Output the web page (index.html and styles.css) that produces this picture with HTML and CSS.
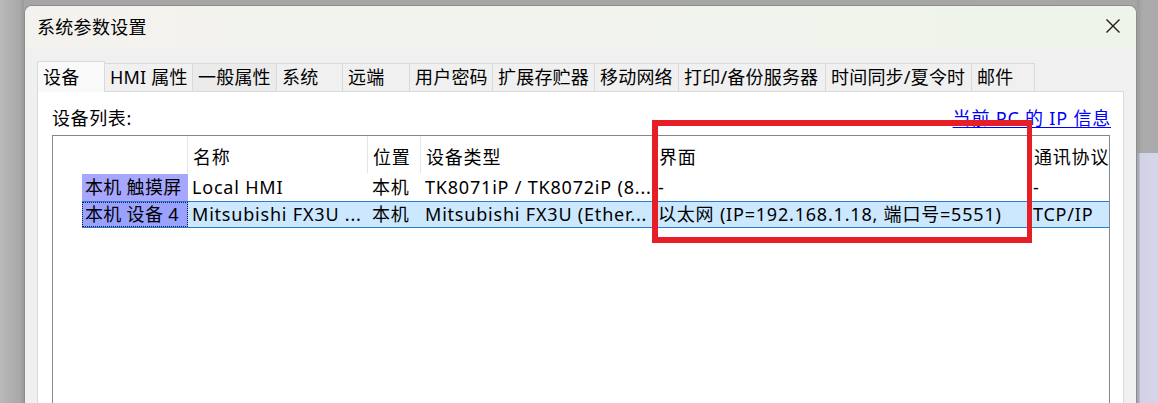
FILE: index.html
```html
<!DOCTYPE html>
<html lang="zh-CN">
<head>
<meta charset="utf-8">
<title>系统参数设置</title>
<link rel="stylesheet" href="styles.css">
</head>
<body>
<div class="gutter-left"></div>
<div class="window">
  <div class="titlebar">
    <span class="title">系统参数设置</span>
    <svg class="close" width="16" height="16" viewBox="0 0 16 16"><path d="M1.5 1.5 L14.5 14.5 M14.5 1.5 L1.5 14.5" stroke="#1a1a1a" stroke-width="1.4" fill="none"/></svg>
  </div>
  <div class="content">
    <div class="tabs">
      <div class="tab tab-active w1">设备</div>
      <div class="tab w2">HMI 属性</div>
      <div class="tab w3">一般属性</div>
      <div class="tab w4">系统</div>
      <div class="tab w5">远端</div>
      <div class="tab w6">用户密码</div>
      <div class="tab w7">扩展存贮器</div>
      <div class="tab w8">移动网络</div>
      <div class="tab w9">打印/备份服务器</div>
      <div class="tab w10">时间同步/夏令时</div>
      <div class="tab w11">邮件</div>
    </div>
    <div class="panel">
      <div class="panel-head">
        <span class="label">设备列表:</span>
        <span class="link">当前 PC 的 IP 信息</span>
      </div>
      <div class="list">
        <div class="list-header">
          <div class="hcell c0"></div>
          <div class="hcell c1">名称</div>
          <div class="hcell c2">位置</div>
          <div class="hcell c3">设备类型</div>
          <div class="hcell c4">界面</div>
          <div class="hcell c5">通讯协议</div>
        </div>
        <div class="row row-first">
          <div class="cells">
            <div class="cell k0 tag">本机 触摸屏</div>
            <div class="cell c1">Local HMI</div>
            <div class="cell c2">本机</div>
            <div class="cell c3">TK8071iP / TK8072iP (8...</div>
            <div class="cell c4">-</div>
            <div class="cell c5">-</div>
          </div>
        </div>
        <div class="row">
          <div class="cells selected">
            <div class="cell k0 tag tag-focus">本机 设备 4</div>
            <div class="cell c1">Mitsubishi FX3U ...</div>
            <div class="cell c2">本机</div>
            <div class="cell c3">Mitsubishi FX3U (Ether...</div>
            <div class="cell c4">以太网 (IP=192.168.1.18, 端口号=5551)</div>
            <div class="cell c5">TCP/IP</div>
          </div>
        </div>
      </div>
    </div>
  </div>
</div>
<div class="gutter-right"><div class="gr-top"></div><div class="gr-bottom"></div></div>
<div class="highlight-box"></div>
</body>
</html>
```
FILE: styles.css
```css
* { box-sizing: border-box; }
html, body { margin: 0; padding: 0; }
body {
  width: 1158px;
  height: 403px;
  overflow: hidden;
  display: flex;
  background: #a6a6a6;
  padding-top: 5px;
  font-family: "Noto Sans", "Noto Sans CJK SC", sans-serif;
  font-size: 18px;
  color: #000;
  position: relative;
}
.gutter-left {
  width: 24px;
  flex: none;
  margin-top: -5px;
  background: linear-gradient(to right, #b9b9b9, #a9a9a9 80%, #9a9a9a);
}
.gutter-right {
  width: 21px;
  flex: none;
  margin-top: -5px;
  display: flex;
  flex-direction: column;
}
.gr-top { height: 153px; background: linear-gradient(to right, #9c9c9c, #ababab 30%, #aaaaaa); }
.gr-bottom { flex: 1; background: linear-gradient(to right, #a9a9b6 0, #a9a9b6 2px, #d2d2e6 3px, #d6d6ea); }

.window {
  width: 1113px;
  flex: none;
  display: flex;
  flex-direction: column;
  border: 1px solid #8c8c8c;
  border-bottom: none;
  border-radius: 8px 8px 0 0;
  overflow: hidden;
  background: #f0f0f0;
}
.titlebar {
  height: 42px;
  flex: none;
  display: flex;
  align-items: center;
  justify-content: space-between;
  padding: 0 16px 0 12px;
  background: linear-gradient(to right, #f4f2ee, #f1f3ec 50%, #eef4ea);
}
.title { line-height: 24px; margin-top: -1px; letter-spacing: 0.3px; }
.close { display: block; margin-top: -3px; margin-right: -1px; }

.content {
  flex: 1;
  display: flex;
  flex-direction: column;
  padding: 13px 12px 0 12px;
}
.tabs {
  display: flex;
  align-items: flex-end;
  height: 30px;
  position: relative;
  z-index: 1;
}
.tab {
  height: 28px;
  border: 1px solid #dadada;
  border-bottom: none;
  border-left: none;
  padding-left: 5px;
  line-height: 27px;
  white-space: nowrap;
  background: #f0f0f0;
  overflow: hidden;
  letter-spacing: 0.2px;
}
.tab-active {
  height: 31px;
  margin-bottom: -1px;
  border-left: 1px solid #dadada;
  background: #f9f9f9;
  line-height: 30px;
}
.w1 { width: 68px; }
.w2 { width: 88px; }
.w3 { width: 84px; background: #ebebeb; }
.w4 { width: 66px; }
.w5 { width: 67px; }
.w6 { width: 83px; }
.w7 { width: 102px; }
.w8 { width: 84px; }
.w9 { width: 147px; }
.w10 { width: 146px; }
.w11 { width: 63px; }

.panel {
  flex: 1;
  border: 1px solid #dadada;
  border-bottom: none;
  background: #fff;
  padding: 13px 13px 0 14px;
  display: flex;
  flex-direction: column;
  letter-spacing: 0.8px;
}
.panel-head {
  height: 26px;
  display: flex;
  justify-content: space-between;
  align-items: center;
  margin-bottom: 4px;
}
.label { line-height: 26px; letter-spacing: 0.6px; }
.link {
  color: #0000ff;
  text-decoration: underline;
  text-underline-offset: 2px;
  line-height: 26px;
  margin-right: -1px;
}
.list {
  flex: 1;
  border: 1px solid #828790;
  border-bottom: none;
  overflow: hidden;
}
.list-header {
  display: flex;
  height: 37px;
}
.hcell {
  flex: none;
  height: 37px;
  border-right: 1px solid #e5e5e5;
  padding-left: 5px;
  padding-top: 7px;
  line-height: 28px;
  white-space: nowrap;
  overflow: hidden;
}
.c0 { width: 135px; }
.c1 { width: 180px; }
.c2 { width: 53px; }
.c3 { width: 233px; }
.c4 { width: 375px; }
.c5 { width: 80px; border-right: none; }
.k0 { width: 106px; }

.row {
  display: flex;
  padding-left: 29px;
  height: 27px;
}
.row-first { margin-top: 1px; }
.cells {
  flex: 1;
  display: flex;
  height: 27px;
}
.cells.selected {
  background: #cce8ff;
  border-top: 1px solid #2a7bd0;
  border-bottom: 1px solid #2a7bd0;
}
.cell {
  flex: none;
  padding-left: 4px;
  line-height: 26px;
  white-space: nowrap;
  overflow: hidden;
}
.cells.selected .cell { line-height: 25px; }
.tag {
  padding-left: 3px;
  background: #a7a7ff;
  letter-spacing: 0.3px;
}
.tag-focus {
  background: #99a2ff;
  outline: 1px dotted #1a1a40;
  outline-offset: -1px;
}

.highlight-box {
  position: absolute;
  left: 652px;
  top: 120px;
  width: 380px;
  height: 123px;
  border: 6px solid #e61f26;
  border-right-width: 5px;
  pointer-events: none;
}
```
